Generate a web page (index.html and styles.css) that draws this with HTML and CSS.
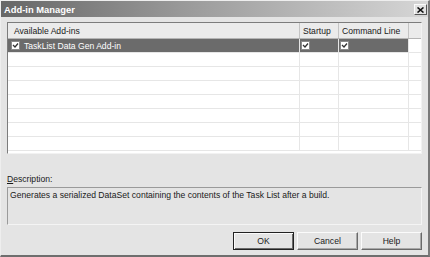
FILE: index.html
```html
<!doctype html>
<html lang="en">
    <head>
        <meta charset="utf-8">
        <title>Add-in Manager</title>
        <link rel="stylesheet" href="styles.css">
    </head>
    <body>
        <div class="dialog">
            <div class="titlebar">
                <span class="title">Add-in Manager</span>
                <span class="closeButton">
                    <svg width="7" height="6" viewBox="0 0 7 6">
                        <path d="M0.5 0.5 L6.5 5.5 M6.5 0.5 L0.5 5.5" stroke="#111" stroke-width="1.6" fill="none"/>
                    </svg>
                </span>
            </div>

            <div class="client">
                <div class="addinList">
                    <div class="row head">
                        <div class="cell">Available Add-ins</div>
                        <div class="cell">Startup</div>
                        <div class="cell">Command Line</div>
                        <div class="cell"></div>
                    </div>
                    <div class="row selected">
                        <div class="cell"><span class="check"><svg width="7" height="7" viewBox="0 0 7 7"><path d="M1 3 L3 5 L6 1.5" stroke="#333" stroke-width="1.3" fill="none"/></svg></span>TaskList Data Gen Add-in</div>
                        <div class="cell"><span class="check"><svg width="7" height="7" viewBox="0 0 7 7"><path d="M1 3 L3 5 L6 1.5" stroke="#333" stroke-width="1.3" fill="none"/></svg></span></div>
                        <div class="cell"><span class="check"><svg width="7" height="7" viewBox="0 0 7 7"><path d="M1 3 L3 5 L6 1.5" stroke="#333" stroke-width="1.3" fill="none"/></svg></span></div>
                        <div class="cell blank"></div>
                    </div>
                    <div class="row"><div class="cell"></div><div class="cell"></div><div class="cell"></div><div class="cell"></div></div>
                    <div class="row"><div class="cell"></div><div class="cell"></div><div class="cell"></div><div class="cell"></div></div>
                    <div class="row"><div class="cell"></div><div class="cell"></div><div class="cell"></div><div class="cell"></div></div>
                    <div class="row"><div class="cell"></div><div class="cell"></div><div class="cell"></div><div class="cell"></div></div>
                    <div class="row"><div class="cell"></div><div class="cell"></div><div class="cell"></div><div class="cell"></div></div>
                    <div class="row"><div class="cell"></div><div class="cell"></div><div class="cell"></div><div class="cell"></div></div>
                    <div class="row"><div class="cell"></div><div class="cell"></div><div class="cell"></div><div class="cell"></div></div>
                </div>

                <div class="descLabel"><u>D</u>escription:</div>
                <div class="description">Generates a serialized DataSet containing the contents of the Task List after a build.</div>

                <div class="buttons">
                    <button class="dlgButton default">OK</button>
                    <button class="dlgButton">Cancel</button>
                    <button class="dlgButton">Help</button>
                </div>
            </div>
        </div>
    </body>
</html>
```

FILE: styles.css
```css
body {
    margin: 0;
    font-family: 'Liberation Sans', Arial, sans-serif;
    font-size: 8.6px;
    color: #1a1a1a;
}

.dialog {
    width: 430px;
    height: 257px;
    box-sizing: border-box;
    display: flex;
    flex-direction: column;
    background: #e4e4e4;
    border-top: 1px solid #eeeeee;
    border-left: 1px solid #eeeeee;
    border-right: 2px solid #7a7a7a;
    border-bottom: 2px solid #6e6e6e;
}

.titlebar {
    height: 16px;
    display: flex;
    align-items: center;
    justify-content: space-between;
    padding: 0 1px 0 3px;
    background: linear-gradient(to right, #676767, #9c9c9c 45%, #d6d6d6);
}

.title {
    color: #fff;
    font-weight: bold;
    font-size: 9.4px;
}

.closeButton {
    width: 11px;
    height: 9px;
    display: flex;
    align-items: center;
    justify-content: center;
    background: #e2e2e2;
    border: 1px solid;
    border-color: #fafafa #555 #555 #fafafa;
    margin-top: 1px;
}

.client {
    flex: 1;
    display: flex;
    flex-direction: column;
    padding: 5px 6px 0 6px;
}

.addinList {
    height: 132px;
    box-sizing: border-box;
    overflow: hidden;
    background: #fff;
    border: 1px solid;
    border-color: #7c7c7c #f2f2f2 #f2f2f2 #7c7c7c;
}

.row {
    display: grid;
    grid-template-columns: 291px 39px 70px 13px;
    height: 14px;
    box-sizing: border-box;
    border-bottom: 1px solid #e6e6e6;
}

.cell {
    display: flex;
    align-items: center;
    overflow: hidden;
    white-space: nowrap;
}

.cell + .cell {
    border-left: 1px solid #e6e6e6;
}

.head {
    height: 16px;
    background: #ebebeb;
    border-bottom: 1px solid #b4b4b4;
}

.head .cell {
    padding-left: 5px;
}

.head .cell + .cell {
    padding-left: 3px;
    border-left: 1px solid #c4c4c4;
}

.head .cell:first-child {
    padding-left: 6px;
}

.selected .cell {
    background: #6b6b6b;
    color: #fff;
}

.selected .cell.blank {
    background: #fff;
}

.check {
    width: 7px;
    height: 7px;
    display: inline-flex;
    align-items: center;
    justify-content: center;
    background: #fff;
    border: 1px solid #8a8a8a;
    margin-left: 1px;
}

.selected .cell:first-child .check {
    margin-left: 3px;
    margin-right: 4px;
}

.descLabel {
    margin-top: 20px;
    height: 11px;
    line-height: 11px;
}

.description {
    margin-top: 2px;
    height: 38px;
    box-sizing: border-box;
    padding: 2px 2px;
    line-height: 11px;
    border: 1px solid;
    border-color: #9a9a9a #f4f4f4 #f4f4f4 #9a9a9a;
}

.buttons {
    margin-top: 7px;
    display: flex;
    justify-content: flex-end;
    gap: 3px;
}

.dlgButton {
    width: 61px;
    height: 18px;
    padding: 0;
    font-family: inherit;
    font-size: 8.6px;
    color: #1a1a1a;
    background: #e4e4e4;
    border: 1px solid;
    border-color: #fbfbfb #6a6a6a #6a6a6a #fbfbfb;
    box-shadow: inset -1px -1px 0 #a8a8a8;
}

.dlgButton.default {
    border: 1px solid #222;
    box-shadow: inset 1px 1px 0 #fbfbfb, inset -1px -1px 0 #6a6a6a;
}
```
